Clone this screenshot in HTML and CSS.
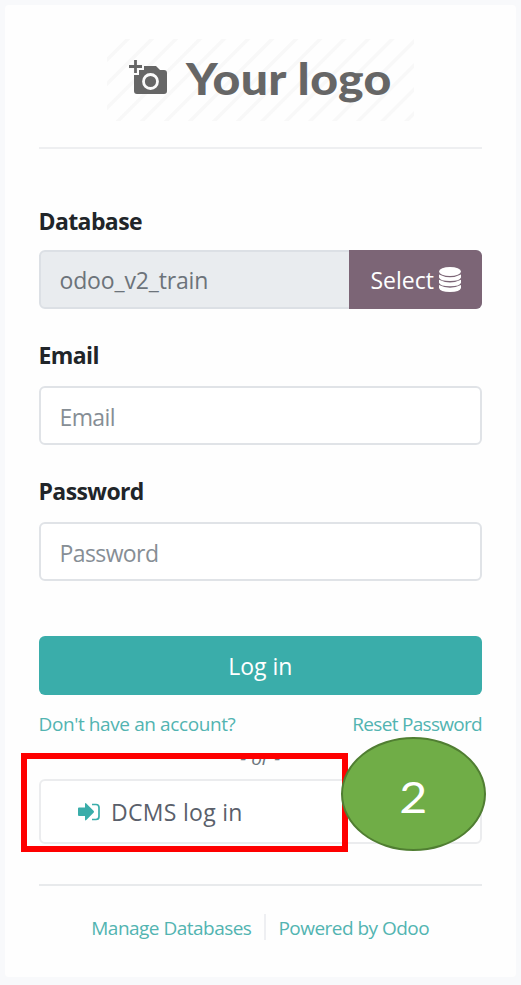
FILE: index.html
```html
<!DOCTYPE html>
<html lang="en">
<head>
<meta charset="utf-8">
<title>Log in</title>
<link rel="stylesheet" href="styles.css">
</head>
<body>
<main class="card">
  <header class="brand">
    <div class="logo">
      <svg class="camera" viewBox="0 0 39 36" aria-hidden="true">
        <path fill="#666" d="M17 6h10l4 4h4q3 0 3 3v18q0 3-3 3H8q-3 0-3-3V15h5v-5h5V6z"/>
        <path stroke="#fafafa" stroke-width="5.500" fill="none" d="M6.500 0v15M0 6.500h15"/>
        <path stroke="#666" stroke-width="2.800" fill="none" d="M6.500 0v13M0 6.500h13"/>
        <circle cx="21.500" cy="21.500" r="7" fill="#666" stroke="#fafafa" stroke-width="2.800"/>
      </svg>
      <span class="logo-text">Your logo</span>
    </div>
  </header>
  <form class="login">
    <label class="label">Database</label>
    <div class="field field-db">
      <span class="db-name">odoo_v2_train</span>
      <a class="select"><span class="select-text">Select</span>
        <svg class="db-icon" viewBox="0 0 22 25" aria-hidden="true">
          <ellipse cx="11" cy="4.500" rx="11" ry="4.500" fill="#fff"/>
          <path fill="#fff" d="M0 7.500q11 5.500 22 0v3q-1 3.500-11 3.500T0 10.500zM0 12.700q11 5.500 22 0v3q-1 3.500-11 3.500T0 15.700zM0 18q11 5.500 22 0v3q-1 4-11 4T0 21z"/>
        </svg>
      </a>
    </div>
    <label class="label label-next">Email</label>
    <div class="field"><span class="placeholder">Email</span></div>
    <label class="label label-next">Password</label>
    <div class="field"><span class="placeholder">Password</span></div>
    <div class="submit">Log in</div>
    <div class="links"><a>Don't have an account?</a><a class="reset">Reset Password</a></div>
    <div class="providers">
      <em class="or">- or -</em>
      <div class="provider">
        <svg class="enter" viewBox="0 0 22 18" aria-hidden="true">
          <path fill="#3aadaa" d="M0 5.500q0-1 1-1h6V1q0-1.500 1.300-.6l7.200 7.300q1 1 0 2l-7.200 7.300Q7 18 7 16.500V13H1q-1 0-1-1z"/>
          <path fill="none" stroke="#3aadaa" stroke-width="1.700" d="M14 1.500h4q3 0 3 3v9q0 3-3 3h-4"/>
        </svg>
        <span>DCMS log in</span>
      </div>
      <div class="highlight"></div>
      <div class="step"><span>2</span></div>
    </div>
  </form>
  <footer class="footer"><a>Manage Databases</a><a class="powered">Powered by Odoo</a></footer>
</main>
</body>
</html>
```

FILE: styles.css
```css
* { box-sizing: border-box; }
body {
  margin: 0;
  padding: 5px;
  height: 985px;
  background: #f8f9fb;
  font-family: "Open Sans", "Noto Sans", sans-serif;
  font-size: 23px;
  color: #495057;
  overflow: hidden;
}
.card {
  width: 511px;
  height: 972px;
  padding: 34px 34px 0 33.500px;
  background: #fefefe;
  border-radius: 4px;
}
.brand {
  height: 110px;
  border-bottom: 2px solid #eeeff1;
}
.logo {
  display: flex;
  align-items: center;
  width: 307px;
  height: 82px;
  margin-left: 68.500px;
  padding-left: 22px;
  background: repeating-linear-gradient(135deg, #fefefe 0 12.500px, #f8f8f8 13.500px 16px, #fefefe 17px);
}
.camera { width: 39px; height: 36px; margin-top: -4px; }
.logo-text {
  margin-left: 18px;
  margin-top: -4px;
  font: 900 44px/82px Lato, sans-serif;
  letter-spacing: 0.300px;
  color: #666;
  white-space: nowrap;
  transform: scaleX(1.095);
  transform-origin: left;
}
.label {
  display: block;
  height: 30px;
  margin-top: 57px;
  margin-bottom: 14px;
  line-height: 30px;
  font-weight: 700;
  letter-spacing: -0.600px;
  color: #212529;
}
.label-next { margin-top: 31px; margin-bottom: 16px; }
.field {
  display: flex;
  align-items: center;
  height: 59px;
  padding-left: 19px;
  border: 2px solid #e0e3e7;
  border-radius: 6px;
  background: #fff;
  white-space: nowrap;
}
.field-db { background: #e9ecef; border-color: #dce0e5; justify-content: space-between; }
.db-name { color: #6c737a; letter-spacing: -0.150px; }
.placeholder { padding-top: 2px; color: #868e95; letter-spacing: -0.600px; }
.select {
  display: flex;
  align-items: center;
  gap: 5px;
  width: 133px;
  height: 59px;
  margin-right: -2px;
  padding-left: 21.500px;
  border-radius: 0 6px 6px 0;
  background: #7c6576;
  color: #fff;
}
.select-text { width: 63px; }
.db-icon { width: 22px; height: 25px; flex: none; }
.submit {
  height: 59px;
  margin-top: 55px;
  border-radius: 6px;
  background: #3aadaa;
  color: #fff;
  line-height: 60px;
  text-align: center;
}
.links {
  display: flex;
  justify-content: space-between;
  height: 30px;
  margin-top: 14px;
  line-height: 30px;
  font-size: 19px;
  letter-spacing: -0.400px;
  color: #52b4b1;
  white-space: nowrap;
}
.reset { letter-spacing: -0.700px; }
.providers { position: relative; height: 147px; border-bottom: 2px solid #e8eaec; }
.or {
  display: block;
  height: 40px;
  line-height: 38px;
  text-align: center;
  font-size: 19px;
  color: #6c757d;
}
.provider {
  display: flex;
  align-items: center;
  height: 65px;
  padding-left: 37.500px;
  gap: 11px;
  border: 2px solid #ebecee;
  border-radius: 6px;
  background: #fff;
  color: #5a5f6b;
  letter-spacing: 0.300px;
}
.enter { width: 22px; height: 18px; }
.highlight {
  position: absolute;
  left: -17.500px;
  top: 14px;
  width: 327px;
  height: 99px;
  border: 6px solid #fe0000;
}
.step {
  position: absolute;
  left: 302.500px;
  top: -2px;
  width: 145px;
  height: 114px;
  border: 2px solid #507e32;
  border-radius: 50%;
  background: #70ad47;
  color: #fff;
  font: 400 42px/116px Lato, sans-serif;
  text-align: center;
}
.step span { display: inline-block; transform: scaleX(1.150); }
.footer {
  display: flex;
  justify-content: center;
  height: 26px;
  margin-top: 28px;
  line-height: 28px;
  font-size: 19px;
  letter-spacing: -0.520px;
  color: #52b4b1;
  white-space: nowrap;
}
.powered { margin-left: 13px; padding-left: 12px; border-left: 2px solid #eeeff2; }
```
